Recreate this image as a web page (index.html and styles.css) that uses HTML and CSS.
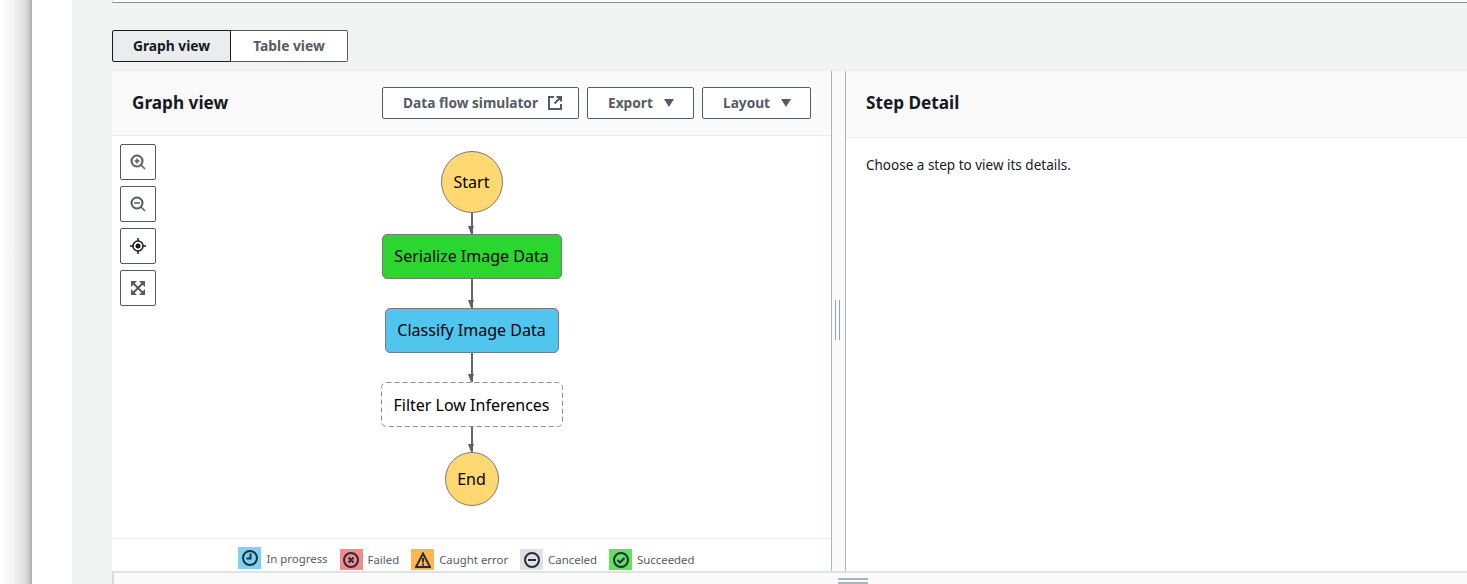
FILE: index.html
```html
<!DOCTYPE html>
<html>

<head>
    <link rel="stylesheet" href="styles.css">
</head>

<body>
    <div class="page">
        <div class="edge-shadow"></div>
        <div class="side-nav"></div>
        <div class="main">
            <div class="top-card"></div>
            <div class="tabs">
                <button class="tab tab-active">Graph view</button>
                <button class="tab">Table view</button>
            </div>
            <div class="split">
                <div class="split-top">
                    <div class="graph-panel">
                        <div class="panel-header graph-header">
                            <h2 class="panel-title graph-title">Graph view</h2>
                            <div class="header-actions">
                                <button class="btn btn-sim"><span class="btn-label">Data flow simulator</span>
                                    <svg class="btn-icon" viewBox="0 0 16 16" width="16" height="16">
                                        <path d="M7 2H2v12h12V9M9.500 2H14v4.500M14 2L7.500 8.500" fill="none" stroke="#545b64" stroke-width="2"/>
                                    </svg>
                                </button>
                                <button class="btn btn-export"><span class="btn-label">Export</span> <span class="caret"></span></button>
                                <button class="btn btn-layout"><span class="btn-label">Layout</span> <span class="caret"></span></button>
                            </div>
                        </div>
                        <div class="canvas">
                            <div class="zoom-tools">
                                <button class="tool">
                                    <svg viewBox="0 0 16 16" width="16" height="16">
                                        <circle cx="7" cy="7" r="5.500" fill="none" stroke="#545b64" stroke-width="2"/>
                                        <path d="M11 11l4 4M4.500 7h5M7 4.500v5" fill="none" stroke="#545b64" stroke-width="1.500"/>
                                    </svg>
                                </button>
                                <button class="tool">
                                    <svg viewBox="0 0 16 16" width="16" height="16">
                                        <circle cx="7" cy="7" r="5.500" fill="none" stroke="#545b64" stroke-width="2"/>
                                        <path d="M11 11l4 4M4 7h6" fill="none" stroke="#545b64" stroke-width="1.500"/>
                                    </svg>
                                </button>
                                <button class="tool">
                                    <svg viewBox="0 0 16 16" width="16" height="16">
                                        <circle cx="8" cy="8" r="5" fill="none" stroke="#16191f" stroke-width="1.500"/>
                                        <circle cx="8" cy="8" r="2.500" fill="#16191f"/>
                                        <path d="M8 0v3M8 13v3M0 8h3M13 8h3" fill="none" stroke="#16191f" stroke-width="1.500"/>
                                    </svg>
                                </button>
                                <button class="tool">
                                    <svg viewBox="0 0 16 16" width="16" height="16">
                                        <path d="M1 1h6L1 7zM15 1H9l6 6zM1 15h6l-6-6zM15 15H9l6-6z" fill="#545b64"/>
                                        <path d="M3 3l10 10M13 3L3 13" fill="none" stroke="#545b64" stroke-width="2"/>
                                    </svg>
                                </button>
                            </div>
                            <div class="flow">
                                <div class="node node-circle node-start">Start</div>
                                <div class="arrow arrow-first"></div>
                                <div class="node node-box node-success">Serialize Image Data</div>
                                <div class="arrow"></div>
                                <div class="node node-box node-progress">Classify Image Data</div>
                                <div class="arrow"></div>
                                <div class="node node-box node-pending">
                                    <svg class="dash-outline" width="182" height="45">
                                        <rect x="0.500" y="0.500" width="181" height="44" rx="5" fill="none" stroke="#8c8c8c" stroke-dasharray="5 3"/>
                                    </svg>
                                    Filter Low Inferences
                                </div>
                                <div class="arrow arrow-last"></div>
                                <div class="node node-circle node-end">End</div>
                            </div>
                        </div>
                        <div class="legend">
                            <div class="legend-item legend-raised">
                                <span class="swatch swatch-blue">
                                    <svg viewBox="0 0 16 16" width="16" height="16">
                                        <circle cx="8" cy="8" r="7" fill="none" stroke="#232f3e" stroke-width="2"/>
                                        <path d="M8.500 3.500v5H4.500" fill="none" stroke="#232f3e" stroke-width="2"/>
                                    </svg>
                                </span>In progress
                            </div>
                            <div class="legend-item">
                                <span class="swatch swatch-red">
                                    <svg viewBox="0 0 16 16" width="16" height="16">
                                        <circle cx="8" cy="8" r="7" fill="none" stroke="#232f3e" stroke-width="2"/>
                                        <path d="M5.500 5.500l5 5M10.500 5.500l-5 5" fill="none" stroke="#232f3e" stroke-width="2"/>
                                    </svg>
                                </span>Failed
                            </div>
                            <div class="legend-item">
                                <span class="swatch swatch-orange">
                                    <svg viewBox="0 0 16 16" width="16" height="16">
                                        <path d="M8 1.500L15 15H1z" fill="none" stroke="#232f3e" stroke-width="2"/>
                                        <path d="M8 6v4.500M8 11.500v2" fill="none" stroke="#232f3e" stroke-width="2"/>
                                    </svg>
                                </span>Caught error
                            </div>
                            <div class="legend-item">
                                <span class="swatch swatch-grey">
                                    <svg viewBox="0 0 16 16" width="16" height="16">
                                        <circle cx="8" cy="8" r="7" fill="none" stroke="#232f3e" stroke-width="2"/>
                                        <path d="M4 8h8" fill="none" stroke="#232f3e" stroke-width="2"/>
                                    </svg>
                                </span>Canceled
                            </div>
                            <div class="legend-item">
                                <span class="swatch swatch-green">
                                    <svg viewBox="0 0 16 16" width="16" height="16">
                                        <circle cx="8" cy="8" r="7" fill="none" stroke="#232f3e" stroke-width="2"/>
                                        <path d="M4.500 8l2.500 2.500 4.500-4.500" fill="none" stroke="#232f3e" stroke-width="2"/>
                                    </svg>
                                </span>Succeeded
                            </div>
                        </div>
                    </div>
                    <div class="gutter">
                        <span class="grip"></span>
                        <span class="grip"></span>
                    </div>
                    <div class="detail-panel">
                        <div class="panel-header detail-header">
                            <h2 class="panel-title">Step Detail</h2>
                        </div>
                        <p class="detail-text">Choose a step to view its details.</p>
                    </div>
                </div>
                <div class="split-bottom">
                    <span class="bottom-grip"></span>
                </div>
            </div>
        </div>
    </div>
</body>

</html>
```

FILE: styles.css
```css
body {
    font-family: "Noto Sans", "Open Sans", Arial, sans-serif;
    margin: 0;
    padding: 0;
    background-color: #fff;
    color: #16191f;
}

.page {
    display: flex;
    height: 584px;
    overflow: hidden;
}

.edge-shadow {
    width: 30px;
    background: linear-gradient(to right, #fff 0%, #f4f4f4 45%, #dcdcdc 85%, #c4c4c4 100%);
}

.side-nav {
    width: 40px;
    background-color: #fff;
    border-left: 2px solid #aab7b8;
}

.main {
    flex: 1;
    display: flex;
    flex-direction: column;
    min-width: 0;
    padding-left: 40px;
    background-color: #f2f3f3;
}

.top-card {
    height: 2px;
    flex-shrink: 0;
    background-color: #fff;
    border-bottom: 1px solid #879596;
    border-left: 1px solid #d5dbdb;
}

/* view switch */
.tabs {
    display: flex;
    margin-top: 27px;
    margin-bottom: 8px;
}

.tab {
    height: 32px;
    width: 117px;
    padding: 0 0 2px;
    font-family: inherit;
    font-size: 13.800px;
    font-weight: 700;
    color: #545b64;
    background-color: #fff;
    border: 1px solid #545b64;
    border-left: none;
    border-radius: 0 2px 2px 0;
}

.tab-active {
    width: 119px;
    color: #16191f;
    background-color: #eaeded;
    border: 1px solid #16191f;
    border-radius: 2px 0 0 2px;
}

/* split panels */
.split {
    flex: 1;
    display: flex;
    flex-direction: column;
    min-height: 0;
    background-color: #fff;
    border-top: 1px solid #eaeded;
}

.split-top {
    flex: 1;
    display: flex;
    min-height: 0;
}

.graph-panel {
    width: 719px;
    display: flex;
    flex-direction: column;
}

.panel-header {
    display: flex;
    align-items: center;
    justify-content: space-between;
    background-color: #fafafa;
    border-bottom: 1px solid #eaeded;
}

.graph-header {
    height: 64px;
    padding: 0 20px;
}

.panel-title {
    margin: 0;
    font-size: 17.200px;
    font-weight: 700;
    color: #16191f;
}

.graph-title {
    margin-bottom: 2px;
}

.header-actions {
    display: flex;
    gap: 8px;
}

.btn {
    height: 32px;
    display: flex;
    align-items: center;
    padding: 0 0 0 20px;
    font-family: inherit;
    font-size: 13.700px;
    font-weight: 700;
    color: #545b64;
    background-color: #fff;
    border: 1px solid #545b64;
    border-radius: 2px;
}

.btn-label {
    margin-bottom: 2px;
}

.btn-sim {
    width: 197px;
}

.btn-export {
    width: 107px;
}

.btn-layout {
    width: 109px;
}

.btn-icon {
    margin-left: 9px;
}

.caret {
    width: 0;
    height: 0;
    margin-left: 11px;
    border-left: 5.500px solid transparent;
    border-right: 5.500px solid transparent;
    border-top: 8px solid #545b64;
}

/* graph */
.canvas {
    position: relative;
    flex: 1;
    display: flex;
    justify-content: center;
    padding-top: 15px;
    min-height: 0;
}

.zoom-tools {
    position: absolute;
    left: 8px;
    top: 8px;
    display: flex;
    flex-direction: column;
    gap: 6px;
}

.tool {
    width: 36px;
    height: 36px;
    display: flex;
    align-items: center;
    justify-content: center;
    padding: 0;
    background-color: #fff;
    border: 1px solid #545b64;
    border-radius: 2px;
}

.flow {
    display: flex;
    flex-direction: column;
    align-items: center;
}

.node {
    display: flex;
    align-items: center;
    justify-content: center;
    flex-shrink: 0;
    box-sizing: border-box;
    font-size: 16px;
    color: #000;
    border: 1px solid #7a7a7a;
}

.node-circle {
    border-radius: 50%;
    background-color: #ffd872;
}

.node-start {
    width: 62px;
    height: 62px;
}

.node-end {
    width: 54px;
    height: 54px;
}

.node-box {
    height: 45px;
    padding-bottom: 2px;
    border-radius: 5px;
}

.node-success {
    width: 180px;
    background-color: #2bd62e;
}

.node-progress {
    width: 174px;
    background-color: #50c6ee;
}

.node-pending {
    position: relative;
    width: 182px;
    padding-bottom: 0;
    background-color: #fff;
    border: none;
}

.dash-outline {
    position: absolute;
    left: 0;
    top: 0;
}

.arrow {
    position: relative;
    width: 2px;
    height: 29px;
    flex-shrink: 0;
    background-color: #666;
}

.arrow-first {
    height: 21px;
}

.arrow-last {
    height: 25px;
}

.arrow::after {
    content: "";
    position: absolute;
    left: -2.500px;
    bottom: 0;
    border-left: 3.500px solid transparent;
    border-right: 3.500px solid transparent;
    border-top: 8px solid #5f5f5f;
}

/* legend */
.legend {
    height: 33px;
    flex-shrink: 0;
    box-sizing: border-box;
    display: flex;
    align-items: flex-end;
    justify-content: center;
    gap: 12px;
    padding-right: 10px;
    font-size: 11.400px;
    color: #545b64;
    border-top: 1px solid #eaeded;
}

.legend-item {
    display: flex;
    align-items: center;
    margin-bottom: 1px;
}

.legend-raised {
    margin-bottom: 2px;
}

.swatch {
    width: 23px;
    height: 21px;
    display: flex;
    align-items: center;
    justify-content: center;
    margin-right: 5px;
}

.legend-raised .swatch {
    height: 22px;
}

.swatch-blue {
    background-color: #7dd3f2;
}

.swatch-red {
    background-color: #fa8a8a;
}

.swatch-orange {
    background-color: #ffb74d;
}

.swatch-grey {
    background-color: #e1e1e1;
}

.swatch-green {
    background-color: #62e05f;
}

/* drag handles */
.gutter {
    width: 11px;
    flex-shrink: 0;
    display: flex;
    align-items: center;
    justify-content: center;
    gap: 3px;
    padding-right: 2px;
    padding-bottom: 2px;
    background-color: #fafafa;
    border-left: 1px solid #aab7b8;
    border-right: 1px solid #aab7b8;
}

.grip {
    width: 1px;
    height: 40px;
    background-color: #95a5a6;
}

.detail-panel {
    flex: 1;
    min-width: 0;
}

.detail-header {
    box-sizing: border-box;
    height: 67px;
    padding: 0 20px 3px;
}

.detail-text {
    margin: 17px 20px 0;
    font-size: 13.500px;
    line-height: 20px;
    color: #16191f;
}

.split-bottom {
    height: 11px;
    flex-shrink: 0;
    display: flex;
    justify-content: center;
    background-color: #fafafa;
    border-top: 2px solid #dfe3e3;
    border-left: 2px solid #d5dbdb;
}

.bottom-grip {
    width: 30px;
    height: 2px;
    margin-top: 5px;
    margin-left: 124px;
    border-top: 2px solid #a8b5b5;
    border-bottom: 2px solid #a8b5b5;
}
```
